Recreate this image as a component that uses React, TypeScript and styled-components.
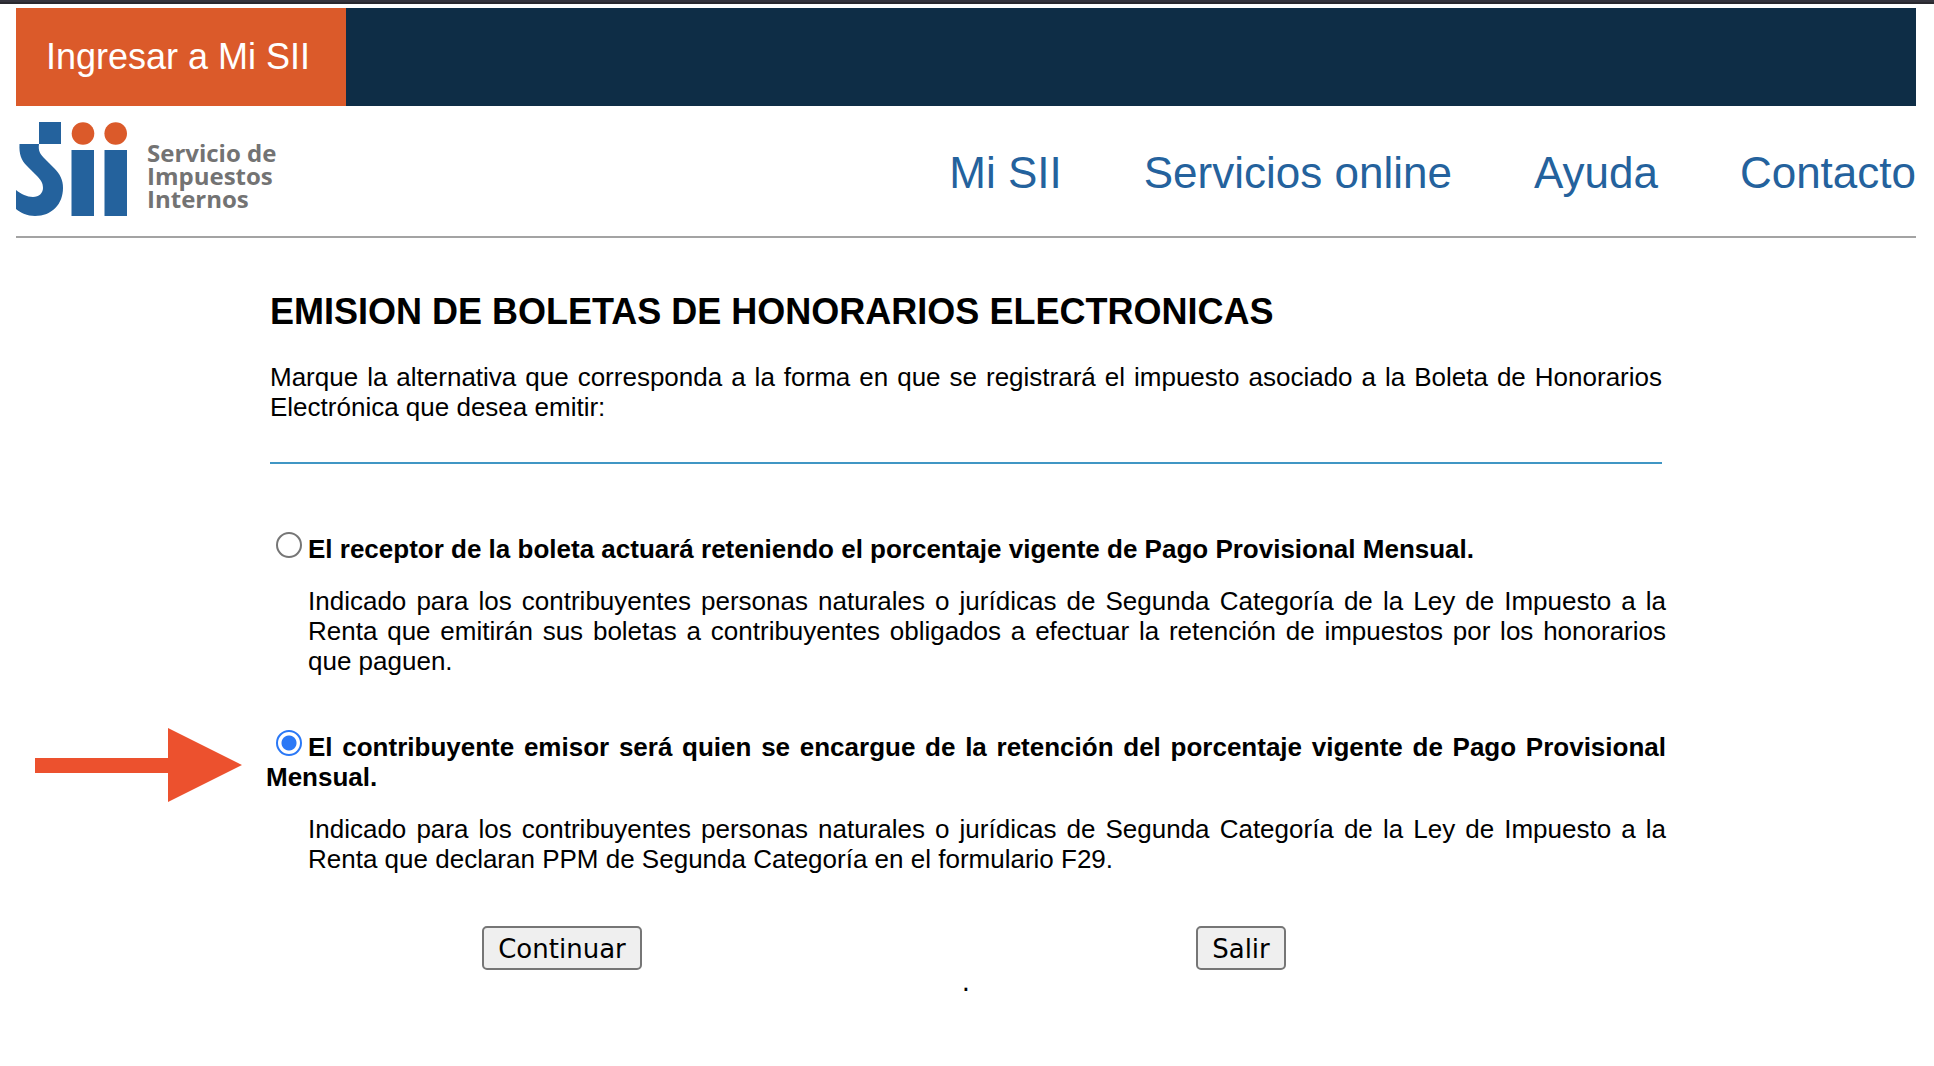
import React, { useState } from "react";
import styled, { createGlobalStyle } from "styled-components";

const GlobalStyle = createGlobalStyle`
  *, *::before, *::after { box-sizing: border-box; }
  body {
    margin: 0;
    background: #fff;
    color: #000;
    font: 26px/30px "Liberation Sans", Arial, Helvetica, sans-serif;
  }
`;

const WindowEdge = styled.div`
  height: 4px;
  background: #2a292f;
  border-top: 2px solid #35343d;
`;

const Page = styled.div`
  padding: 4px 18px 40px 16px;
`;

const TopBar = styled.div`
  display: flex;
  height: 98px;
  background: #0e2d46;
`;

const LoginLink = styled.a`
  display: flex;
  align-items: center;
  padding: 0 36px 0 30px;
  width: 330px;
  background: #db5a2a;
  color: #fff;
  font-size: 36px;
  line-height: 42px;
  text-decoration: none;
  white-space: nowrap;
`;

const Header = styled.header`
  display: flex;
  align-items: flex-start;
  justify-content: space-between;
  height: 132px;
  border-bottom: 2px solid #a3a3a3;
`;

const LogoLink = styled.a`
  display: flex;
  align-items: flex-start;
  gap: 20px;
  padding-top: 16px;
  color: #737373;
  text-decoration: none;
`;

const LogoMark = styled.svg`
  display: block;
  width: 111px;
  height: 94px;
`;

const LogoText = styled.span`
  padding-top: 19px;
  font: bold 24px/23px "Open Sans", "Gill Sans", sans-serif;
`;

const Nav = styled.nav`
  display: flex;
  gap: 82px;
  padding-top: 41px;
`;

const NavLink = styled.a`
  color: #24629d;
  font-size: 44px;
  line-height: 52px;
  text-decoration: none;
  white-space: nowrap;
`;

const Content = styled.main`
  max-width: 1400px;
  margin: 0 auto;
  padding-top: 53px;
`;

const Intro = styled.section`
  margin: 0 4px 68px;
  padding-bottom: 40px;
  border-bottom: 2px solid #4096c4;
`;

const Title = styled.h1`
  margin: 0 0 29px;
  font-size: 36px;
  line-height: 42px;
`;

const Text = styled.p<{ $indent?: boolean }>`
  margin: 0;
  padding-left: ${({ $indent }) => ($indent ? "42px" : "0")};
  text-align: justify;
`;

const Options = styled.div`
  display: grid;
  gap: 54px;
`;

const Option = styled.div`
  position: relative;
  display: grid;
  gap: 22px;
`;

const OptionLabel = styled.label`
  font-weight: bold;
  text-align: justify;
`;

const Radio = styled.input`
  appearance: none;
  width: 26px;
  height: 26px;
  margin: 0 6px 0 10px;
  border: 2px solid #767676;
  border-radius: 50%;
  background: #fff;
  vertical-align: baseline;

  &:checked {
    border-color: #2a78f6;
    background: radial-gradient(circle, #2a78f6 7px, #fff 8px);
  }
`;

const Arrow = styled.svg`
  position: absolute;
  top: -2px;
  left: -231px;
  width: 207px;
  height: 74px;
`;

const Actions = styled.div`
  display: grid;
  grid-template-columns: 592fr 766fr 42fr;
  justify-items: center;
  margin-top: 52px;
`;

const ActionButton = styled.button`
  height: 44px;
  padding: 2px 14px 0;
  border: 2px solid #767676;
  border-radius: 5px;
  background: #efefef;
  color: #000;
  font: 26px/30px Verdana, "DejaVu Sans", sans-serif;
`;

const Footer = styled.footer`
  font: 26px/24px Verdana, "DejaVu Sans", sans-serif;
  text-align: center;
`;

const options = [
  {
    id: "receptor",
    label:
      "El receptor de la boleta actuará reteniendo el porcentaje vigente de Pago Provisional Mensual.",
    detail:
      "Indicado para los contribuyentes personas naturales o jurídicas de Segunda Categoría de la Ley de Impuesto a la Renta que emitirán sus boletas a contribuyentes obligados a efectuar la retención de impuestos por los honorarios que paguen.",
    highlighted: false,
  },
  {
    id: "emisor",
    label:
      "El contribuyente emisor será quien se encargue de la retención del porcentaje vigente de Pago Provisional Mensual.",
    detail:
      "Indicado para los contribuyentes personas naturales o jurídicas de Segunda Categoría de la Ley de Impuesto a la Renta que declaran PPM de Segunda Categoría en el formulario F29.",
    highlighted: true,
  },
];

const navItems = ["Mi SII", "Servicios online", "Ayuda", "Contacto"];

export default function App() {
  const [selected, setSelected] = useState("emisor");

  return (
    <>
      <GlobalStyle />
      <WindowEdge />
      <Page>
        <TopBar>
          <LoginLink href="#ingresar">Ingresar a Mi SII</LoginLink>
        </TopBar>
        <Header>
          <LogoLink href="#inicio">
            <LogoMark viewBox="0 0 111 94" aria-hidden="true">
              <g fill="#24629d">
                <rect x="23" width="22" height="22" />
                <path d="M3.5 22H23C22 29 24 32 29 37L38 46C44 52 47 58 47 66C47 82 36 94 19 94C11 94 5 91 0 87V68C5 72 11 75 17 75C23 75 27 71 27 66C27 61 25 58 20 53L11 44C5 38 3 32 3.5 22Z" />
                <rect x="55.5" y="28" width="22.5" height="66" />
                <rect x="88.5" y="28" width="22.5" height="66" />
              </g>
              <circle cx="67" cy="11.5" r="11.3" fill="#db5a2a" />
              <circle cx="99.7" cy="11.5" r="11.3" fill="#db5a2a" />
            </LogoMark>
            <LogoText>
              Servicio de
              <br />
              Impuestos
              <br />
              Internos
            </LogoText>
          </LogoLink>
          <Nav>
            {navItems.map((item) => (
              <NavLink key={item} href="#menu">
                {item}
              </NavLink>
            ))}
          </Nav>
        </Header>
        <Content>
          <Intro>
            <Title>EMISION DE BOLETAS DE HONORARIOS ELECTRONICAS</Title>
            <Text>
              Marque la alternativa que corresponda a la forma en que se registrará el impuesto
              asociado a la Boleta de Honorarios Electrónica que desea emitir:
            </Text>
          </Intro>
          <Options role="radiogroup">
            {options.map((option) => (
              <Option key={option.id}>
                {option.highlighted && (
                  <Arrow viewBox="0 0 207 74" aria-hidden="true">
                    <path d="M0 30H133V0L207 37L133 74V45H0Z" fill="#ec512e" />
                  </Arrow>
                )}
                <OptionLabel htmlFor={option.id}>
                  <Radio
                    type="radio"
                    name="retencion"
                    id={option.id}
                    checked={selected === option.id}
                    onChange={() => setSelected(option.id)}
                  />
                  {option.label}
                </OptionLabel>
                <Text $indent>{option.detail}</Text>
              </Option>
            ))}
          </Options>
          <Actions>
            <ActionButton type="button">Continuar</ActionButton>
            <ActionButton type="button">Salir</ActionButton>
          </Actions>
        </Content>
        <Footer>.</Footer>
      </Page>
    </>
  );
}
